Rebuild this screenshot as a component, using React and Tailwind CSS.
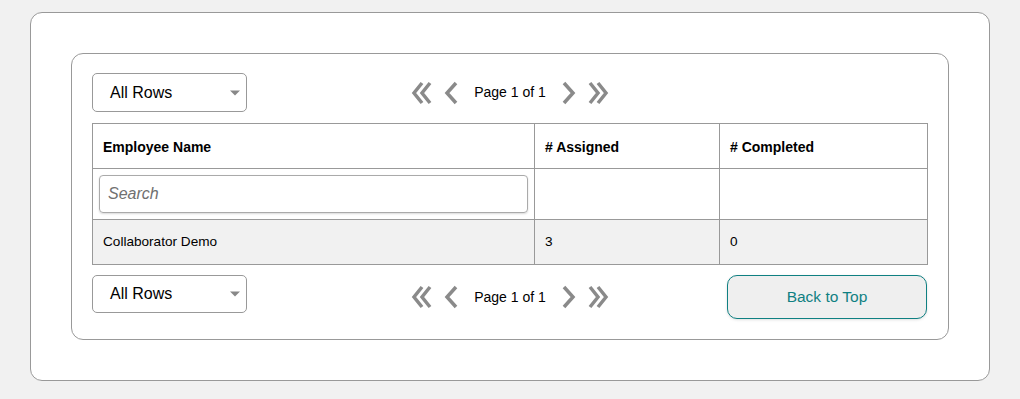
import React from 'react';

const Chevron = ({ dir = 'left', double = false }) => {
    const single = dir === 'left' ? '12,2 3,12 12,22' : '2,2 11,12 2,22';
    if (!double) {
        return (
            <svg width="14" height="24" viewBox="0 0 14 24" className="block">
                <polyline points={single} fill="none" stroke="#8a8a8a" strokeWidth="3.5" />
            </svg>
        );
    }
    const a = dir === 'left' ? '11,2 3,12 11,22' : '3,2 11,12 3,22';
    const b = dir === 'left' ? '19,2 11,12 19,22' : '11,2 19,12 11,22';
    return (
        <svg width="22" height="24" viewBox="0 0 22 24" className="block">
            <polyline points={a} fill="none" stroke="#8a8a8a" strokeWidth="3.5" />
            <polyline points={b} fill="none" stroke="#8a8a8a" strokeWidth="3.5" />
        </svg>
    );
};

const RowsSelect = ({ className = '' }) => (
    <div className={`relative w-[155px] rounded-[5px] border border-[#999] bg-white flex items-center pl-[17px] ${className}`}>
        <span className="text-[16px] text-black">All Rows</span>
        <span className="absolute right-[6px] top-1/2 -translate-y-1/2 w-0 h-0 border-l-[5px] border-r-[5px] border-t-[5px] border-l-transparent border-r-transparent border-t-[#888]" />
    </div>
);

const Pager = () => (
    <div className="flex items-center justify-self-center">
        <Chevron dir="left" double />
        <span className="ml-[11px]"><Chevron dir="left" /></span>
        <span className="mx-[16px] text-[14px] text-black">Page 1 of 1</span>
        <Chevron dir="right" />
        <span className="ml-[11px]"><Chevron dir="right" double /></span>
    </div>
);

export default function App() {
    return (
        <div className="min-h-[399px] bg-[#f1f1f1] pt-[12px] px-[30px] font-['Liberation_Sans',Arial,sans-serif]">
            <div className="rounded-[12px] border border-[#999] bg-white p-10">
                <div className="rounded-[12px] border border-[#999] bg-white px-5 pt-[19px] pb-5">
                    <div className="grid grid-cols-3 items-center">
                        <RowsSelect className="h-[39px]" />
                        <Pager />
                        <div />
                    </div>

                    <table className="mt-[11px] w-full border-collapse table-fixed text-[13.6px] text-black">
                        <colgroup>
                            <col className="w-[442px]" />
                            <col className="w-[185px]" />
                            <col />
                        </colgroup>
                        <thead>
                            <tr className="h-[45px]">
                                <th className="border border-[#999] px-[10px] pt-[2px] text-left text-[14px] font-bold">Employee Name</th>
                                <th className="border border-[#999] px-[10px] pt-[2px] text-left text-[14px] font-bold"># Assigned</th>
                                <th className="border border-[#999] px-[10px] pt-[2px] text-left text-[14px] font-bold"># Completed</th>
                            </tr>
                        </thead>
                        <tbody>
                            <tr className="h-[51px]">
                                <td className="border border-[#999] px-[6px] py-[4px]">
                                    <input
                                        type="text"
                                        placeholder="Search"
                                        className="block w-full h-[38px] rounded-[4px] border border-[#aaa] px-[8px] text-[16px] italic shadow-[0_1px_2px_rgba(0,0,0,0.15)] placeholder:text-[#707070] outline-none"
                                    />
                                </td>
                                <td className="border border-[#999]" />
                                <td className="border border-[#999]" />
                            </tr>
                            <tr className="h-[45px] bg-[#f1f1f1]">
                                <td className="border border-[#999] px-[10px] pt-[1px]">Collaborator Demo</td>
                                <td className="border border-[#999] px-[10px] pt-[1px]">3</td>
                                <td className="border border-[#999] px-[10px] pt-[1px]">0</td>
                            </tr>
                        </tbody>
                    </table>

                    <div className="mt-[10px] grid grid-cols-3 items-center">
                        <RowsSelect className="h-[38px] self-start" />
                        <Pager />
                        <button className="justify-self-end mr-[1px] w-[200px] h-[44px] rounded-[10px] border border-[#0f8082] bg-[#efefef] text-[15.5px] text-[#0f8082] shadow-[0_1px_3px_rgba(0,0,0,0.12)]">
                            Back to Top
                        </button>
                    </div>
                </div>
            </div>
        </div>
    );
}
